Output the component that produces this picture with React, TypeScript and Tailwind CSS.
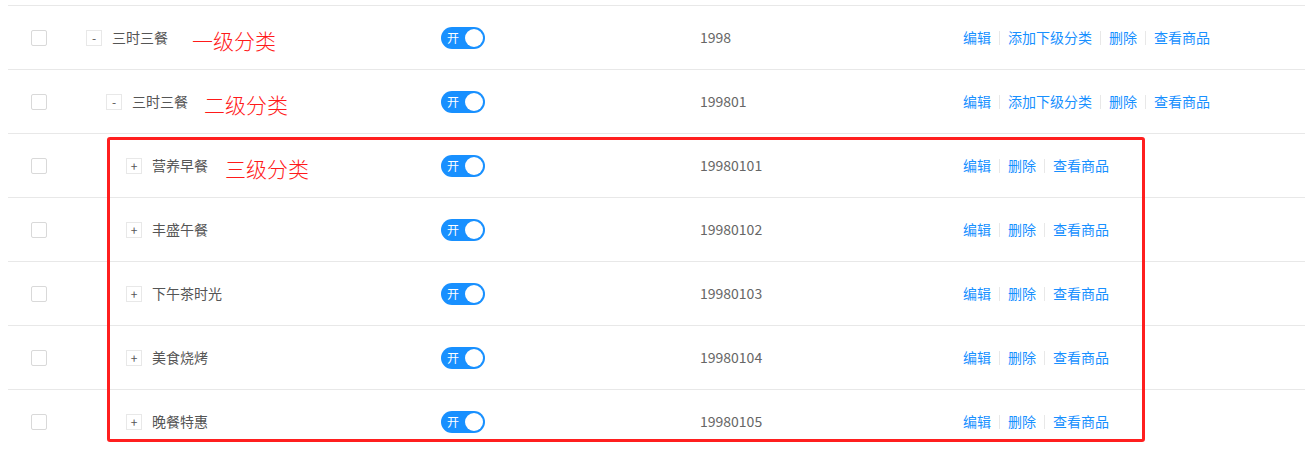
import React from 'react';

interface Category {
  id: string;
  name: string;
  level: number;
  code: string;
  expanded: boolean;
  note?: string;
  noteGap?: string;
}

const rows: Category[] = [
  { id: '1', name: '三时三餐', level: 0, code: '1998', expanded: true, note: '一级分类', noteGap: 'ml-[24px]' },
  { id: '2', name: '三时三餐', level: 1, code: '199801', expanded: true, note: '二级分类', noteGap: 'ml-[16px]' },
  { id: '3', name: '营养早餐', level: 2, code: '19980101', expanded: false, note: '三级分类', noteGap: 'ml-[17px]' },
  { id: '4', name: '丰盛午餐', level: 2, code: '19980102', expanded: false },
  { id: '5', name: '下午茶时光', level: 2, code: '19980103', expanded: false },
  { id: '6', name: '美食烧烤', level: 2, code: '19980104', expanded: false },
  { id: '7', name: '晚餐特惠', level: 2, code: '19980105', expanded: false },
];

const indent = ['pl-0', 'pl-[20px]', 'pl-[40px]'];

const Switch: React.FC = () => (
  <button className="relative w-[44px] h-[22px] rounded-full bg-[#1890ff] flex items-center">
    <span className="ml-[6px] text-[12px] leading-none text-white">开</span>
    <span className="absolute right-[2px] top-[2px] w-[18px] h-[18px] rounded-full bg-white" />
  </button>
);

const Divider: React.FC = () => <span className="mx-[8px] w-px h-[14px] bg-[#e8e8e8]" />;

const App: React.FC = () => {
  return (
    <div
      className="relative bg-white min-h-[451px] pt-[5px] pl-[8px] text-[14px] text-[#606266]"
      style={{ fontFamily: '"Noto Sans CJK SC", "Noto Sans", sans-serif' }}
    >
      {rows.map(row => (
        <div key={row.id} className="flex items-center h-[64px] border-t border-[#e8e8e8]">
          {/* checkbox */}
          <div className="w-[78px] pl-[23px] flex items-center">
            <span className="w-[16px] h-[16px] border border-[#d9d9d9] rounded-[2px] bg-white" />
          </div>

          {/* name */}
          <div className={`w-[355px] flex items-center ${indent[row.level]}`}>
            <span className="w-[16px] h-[16px] border border-[#e8e8e8] flex items-center justify-center text-[12px] leading-none text-[#555]">
              {row.expanded ? '-' : '+'}
            </span>
            <span className="ml-[10px] text-[#555]">{row.name}</span>
            {row.note && (
              <span className={`${row.noteGap} pt-[6px] text-[21px] leading-none text-[#ff1a1a] font-light`}>
                {row.note}
              </span>
            )}
          </div>

          {/* status */}
          <div className="w-[259px] flex items-center">
            <Switch />
          </div>

          {/* code */}
          <div className="w-[263px] text-[#666]">{row.code}</div>

          {/* actions */}
          <div className="flex items-center text-[#1890ff]">
            <a>编辑</a>
            <Divider />
            {row.level < 2 && (
              <>
                <a>添加下级分类</a>
                <Divider />
              </>
            )}
            <a>删除</a>
            <Divider />
            <a>查看商品</a>
          </div>
        </div>
      ))}

      {/* annotation box around level-3 rows */}
      <div className="absolute left-[107px] top-[137px] w-[1038px] h-[305px] border-[3px] border-[#ff1f1f] rounded-[3px] pointer-events-none" />
    </div>
  );
};

export default App;
